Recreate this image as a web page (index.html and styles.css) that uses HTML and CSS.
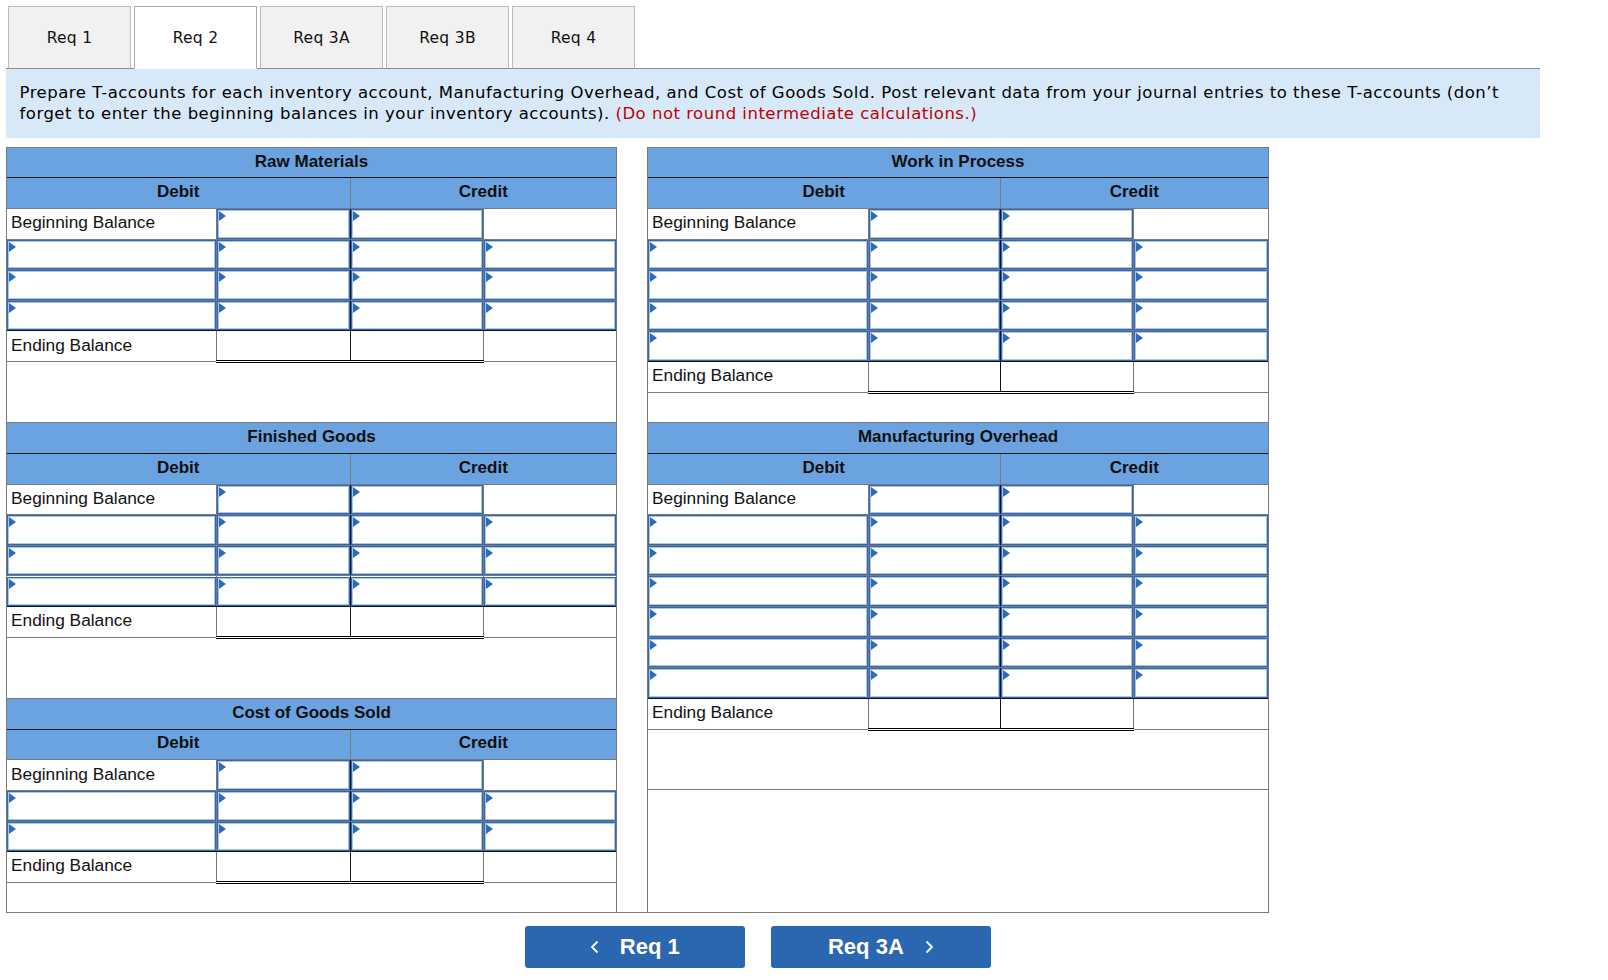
FILE: index.html
```html
<!DOCTYPE html>
<html lang="en">
<head>
<meta charset="utf-8">
<title>T-accounts</title>
<link rel="stylesheet" href="styles.css">
</head>
<body>
<div class="page">
  <div class="tabs">
    <div class="tab">Req 1</div>
    <div class="tab active">Req 2</div>
    <div class="tab">Req 3A</div>
    <div class="tab">Req 3B</div>
    <div class="tab">Req 4</div>
  </div>
  <div class="prompt">Prepare T-accounts for each inventory account, Manufacturing Overhead, and Cost of Goods Sold. Post relevant data from your journal entries to these T-accounts (don’t<br>forget to enter the beginning balances in your inventory accounts). <span class="red">(Do not round intermediate calculations.)</span></div>

  <div class="sheet">
    <div class="col left">
      <table class="tacct">
        <colgroup><col class="w1"><col class="w2"><col class="w3"><col class="w4"></colgroup>
        <tr class="title"><td colspan="4">Raw Materials</td></tr>
        <tr class="head"><td colspan="2">Debit</td><td colspan="2">Credit</td></tr>
        <tr class="d"><td class="lbl">Beginning Balance</td><td><div class="inp"></div></td><td><div class="inp"></div></td><td></td></tr>
        <tr class="d"><td><div class="inp"></div></td><td><div class="inp"></div></td><td><div class="inp"></div></td><td><div class="inp"></div></td></tr>
        <tr class="d"><td><div class="inp"></div></td><td><div class="inp"></div></td><td><div class="inp"></div></td><td><div class="inp"></div></td></tr>
        <tr class="d pre"><td><div class="inp"></div></td><td><div class="inp"></div></td><td><div class="inp"></div></td><td><div class="inp"></div></td></tr>
        <tr class="d end"><td class="lbl">Ending Balance</td><td class="tot"></td><td class="tot"></td><td></td></tr>
      </table>
      <div class="blank2"></div>
      <table class="tacct">
        <colgroup><col class="w1"><col class="w2"><col class="w3"><col class="w4"></colgroup>
        <tr class="title"><td colspan="4">Finished Goods</td></tr>
        <tr class="head"><td colspan="2">Debit</td><td colspan="2">Credit</td></tr>
        <tr class="d"><td class="lbl">Beginning Balance</td><td><div class="inp"></div></td><td><div class="inp"></div></td><td></td></tr>
        <tr class="d"><td><div class="inp"></div></td><td><div class="inp"></div></td><td><div class="inp"></div></td><td><div class="inp"></div></td></tr>
        <tr class="d"><td><div class="inp"></div></td><td><div class="inp"></div></td><td><div class="inp"></div></td><td><div class="inp"></div></td></tr>
        <tr class="d pre"><td><div class="inp"></div></td><td><div class="inp"></div></td><td><div class="inp"></div></td><td><div class="inp"></div></td></tr>
        <tr class="d end"><td class="lbl">Ending Balance</td><td class="tot"></td><td class="tot"></td><td></td></tr>
      </table>
      <div class="blank2"></div>
      <table class="tacct">
        <colgroup><col class="w1"><col class="w2"><col class="w3"><col class="w4"></colgroup>
        <tr class="title"><td colspan="4">Cost of Goods Sold</td></tr>
        <tr class="head"><td colspan="2">Debit</td><td colspan="2">Credit</td></tr>
        <tr class="d"><td class="lbl">Beginning Balance</td><td><div class="inp"></div></td><td><div class="inp"></div></td><td></td></tr>
        <tr class="d"><td><div class="inp"></div></td><td><div class="inp"></div></td><td><div class="inp"></div></td><td><div class="inp"></div></td></tr>
        <tr class="d pre"><td><div class="inp"></div></td><td><div class="inp"></div></td><td><div class="inp"></div></td><td><div class="inp"></div></td></tr>
        <tr class="d end"><td class="lbl">Ending Balance</td><td class="tot"></td><td class="tot"></td><td></td></tr>
      </table>
      <div class="rest"></div>
    </div>

    <div class="gap"></div>

    <div class="col right">
      <table class="tacct">
        <colgroup><col class="r1"><col class="r2"><col class="r3"><col class="r4"></colgroup>
        <tr class="title"><td colspan="4">Work in Process</td></tr>
        <tr class="head"><td colspan="2">Debit</td><td colspan="2">Credit</td></tr>
        <tr class="d"><td class="lbl">Beginning Balance</td><td><div class="inp"></div></td><td><div class="inp"></div></td><td></td></tr>
        <tr class="d"><td><div class="inp"></div></td><td><div class="inp"></div></td><td><div class="inp"></div></td><td><div class="inp"></div></td></tr>
        <tr class="d"><td><div class="inp"></div></td><td><div class="inp"></div></td><td><div class="inp"></div></td><td><div class="inp"></div></td></tr>
        <tr class="d"><td><div class="inp"></div></td><td><div class="inp"></div></td><td><div class="inp"></div></td><td><div class="inp"></div></td></tr>
        <tr class="d pre"><td><div class="inp"></div></td><td><div class="inp"></div></td><td><div class="inp"></div></td><td><div class="inp"></div></td></tr>
        <tr class="d end"><td class="lbl">Ending Balance</td><td class="tot"></td><td class="tot"></td><td></td></tr>
      </table>
      <div class="blank1"></div>
      <table class="tacct">
        <colgroup><col class="r1"><col class="r2"><col class="r3"><col class="r4"></colgroup>
        <tr class="title"><td colspan="4">Manufacturing Overhead</td></tr>
        <tr class="head"><td colspan="2">Debit</td><td colspan="2">Credit</td></tr>
        <tr class="d"><td class="lbl">Beginning Balance</td><td><div class="inp"></div></td><td><div class="inp"></div></td><td></td></tr>
        <tr class="d"><td><div class="inp"></div></td><td><div class="inp"></div></td><td><div class="inp"></div></td><td><div class="inp"></div></td></tr>
        <tr class="d"><td><div class="inp"></div></td><td><div class="inp"></div></td><td><div class="inp"></div></td><td><div class="inp"></div></td></tr>
        <tr class="d"><td><div class="inp"></div></td><td><div class="inp"></div></td><td><div class="inp"></div></td><td><div class="inp"></div></td></tr>
        <tr class="d"><td><div class="inp"></div></td><td><div class="inp"></div></td><td><div class="inp"></div></td><td><div class="inp"></div></td></tr>
        <tr class="d"><td><div class="inp"></div></td><td><div class="inp"></div></td><td><div class="inp"></div></td><td><div class="inp"></div></td></tr>
        <tr class="d pre"><td><div class="inp"></div></td><td><div class="inp"></div></td><td><div class="inp"></div></td><td><div class="inp"></div></td></tr>
        <tr class="d end"><td class="lbl">Ending Balance</td><td class="tot"></td><td class="tot"></td><td></td></tr>
      </table>
      <div class="blank2 lined"></div>
      <div class="rest"></div>
    </div>
  </div>

  <div class="nav">
    <button class="navbtn" type="button"><svg class="chev" width="9" height="14" viewBox="0 0 9 14"><polyline points="7.5,1.5 2,7 7.5,12.5" fill="none" stroke="#fff" stroke-width="1.8"/></svg><span>Req 1</span></button>
    <button class="navbtn" type="button"><span>Req 3A</span><svg class="chev" width="9" height="14" viewBox="0 0 9 14"><polyline points="1.5,1.5 7,7 1.5,12.5" fill="none" stroke="#fff" stroke-width="1.8"/></svg></button>
  </div>
</div>
</body>
</html>
```

FILE: styles.css
```css
* { box-sizing: border-box; }

body {
  margin: 0;
  background: #ffffff;
  color: #000;
}

.page {
  padding: 6px 0 0 6px;
}

/* ---------- tabs ---------- */
.tabs {
  display: flex;
  gap: 3px;
  margin-left: 2px;
  margin-bottom: -1px;
  position: relative;
  z-index: 1;
}

.tab {
  width: 123px;
  height: 63px;
  border: 1px solid #bdbdbd;
  border-bottom-color: #8c8c8c;
  background: #f1f1f1;
  display: flex;
  align-items: center;
  justify-content: center;
  font-family: "DejaVu Sans", Verdana, sans-serif;
  font-size: 15.5px;
  letter-spacing: 0.3px;
  color: #111;
}

.tab.active {
  background: #ffffff;
  border-color: #a9a9a9;
  border-bottom-color: #ffffff;
}

/* ---------- prompt bar ---------- */
.prompt {
  width: 1534px;
  background: #d7e9f8;
  border-top: 1px solid #8c8c8c;
  padding: 12.5px 10px 13px 13.5px;
  font-family: "DejaVu Sans", Verdana, sans-serif;
  font-size: 16.5px;
  letter-spacing: 0.5px;
  line-height: 21.5px;
  color: #000;
  white-space: nowrap;
}

.red {
  color: #c00000;
}

/* ---------- sheet ---------- */
.sheet {
  display: flex;
  width: 1263px;
  height: 766px;
  margin-top: 9.2px;
  border-bottom: 1px solid #7a7a7a;
}

.col {
  display: flex;
  flex-direction: column;
  border-left: 1px solid #7a7a7a;
  border-right: 1px solid #7a7a7a;
}

.col.left { width: 611px; }
.gap { width: 30px; }
.col.right { width: 622px; }

.rest { flex: 1; }
.blank1 { height: 28.6px; flex: none; }
.blank2 { height: 59.3px; flex: none; }
.blank2.lined { border-bottom: 1px solid #7a7a7a; }

.tacct {
  width: 100%;
  table-layout: fixed;
  border-collapse: collapse;
  flex: none;
}

.w1 { width: 209px; }
.w2 { width: 134px; }
.w3 { width: 133px; }
.w4 { width: 133px; }

.r1 { width: 220px; }
.r2 { width: 132px; }
.r3 { width: 133px; }
.r4 { width: 135px; }

.tacct tr { height: 30.64px; }

.tacct td {
  padding: 0;
  border: 1px solid #7a7a7a;
  font-family: "Liberation Sans", Arial, Helvetica, sans-serif;
  font-size: 17.3px;
  color: #111;
  vertical-align: middle;
}

.tacct tr:first-child td { border-left: 0; border-right: 0; }
.tacct td:first-child { border-left: 0; }
.tacct td:last-child { border-right: 0; }

.title td,
.head td {
  background: #6aa3df;
  font-weight: bold;
  text-align: center;
  color: #111;
  font-size: 17px;
  padding-bottom: 2px;
}

.title td { border-bottom-color: #111; }

.lbl {
  padding-left: 4px !important;
  padding-bottom: 2px !important;
  white-space: nowrap;
}

.d td:nth-child(2) { border-right-color: #111; }
.pre td { border-bottom-color: #111; }
.end td { border-top-color: #111; }
.end td.tot { border-bottom: 3px double #000; }

.inp {
  position: relative;
  height: 29.6px;
  border: 1px solid #3068b4;
  box-shadow: inset 0 0 0 1px #aac5ea;
  background: #fff;
}

.inp::before {
  content: "";
  position: absolute;
  top: 1px;
  left: 1px;
  width: 0;
  height: 0;
  border-left: 7px solid #2d6bb8;
  border-top: 5px solid transparent;
  border-bottom: 5px solid transparent;
}

/* ---------- nav buttons ---------- */
.nav {
  display: flex;
  gap: 26.5px;
  margin: 13.3px 0 0 519px;
}

.navbtn {
  width: 219.6px;
  height: 42px;
  padding: 0;
  border: 0;
  border-radius: 3px;
  background: #2b67b0;
  color: #fff;
  font-family: "Liberation Sans", Arial, Helvetica, sans-serif;
  font-weight: bold;
  font-size: 22px;
  display: flex;
  align-items: center;
  justify-content: center;
  gap: 21px;
}

.chev { display: block; }
```
